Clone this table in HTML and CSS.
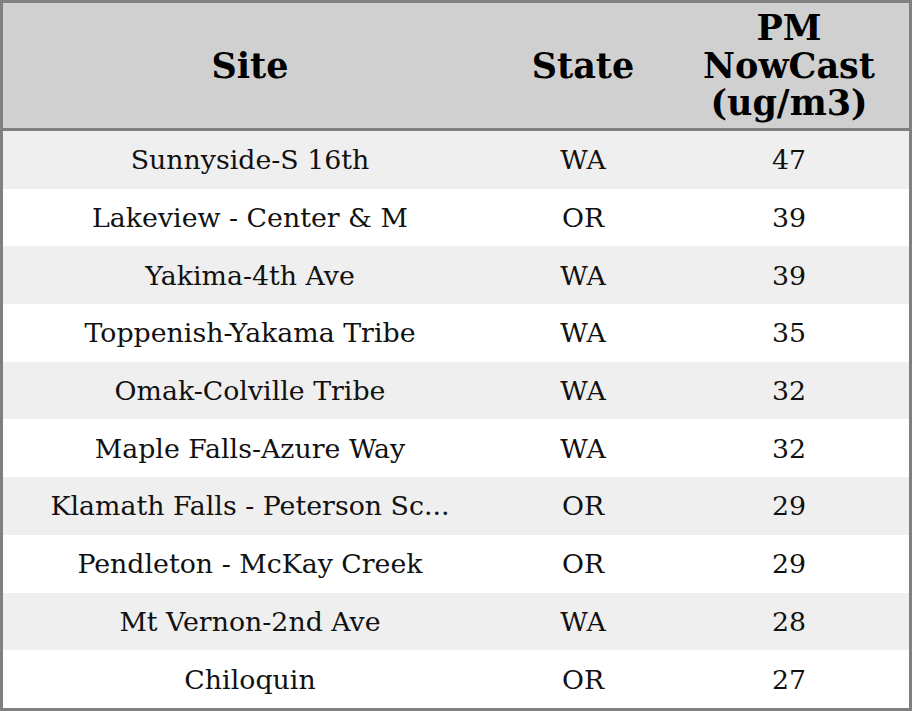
FILE: index.html
```html
<!DOCTYPE html>
<html>
<head>
<meta charset="utf-8">
<link rel="stylesheet" href="styles.css">
</head>
<body>
<table class="aq">
  <colgroup>
    <col class="c-site">
    <col class="c-state">
    <col class="c-pm">
  </colgroup>
  <thead>
    <tr><th>Site</th><th>State</th><th>PM<br>NowCast<br>(ug/m3)</th></tr>
  </thead>
  <tbody>
    <tr><td>Sunnyside-S 16th</td><td>WA</td><td>47</td></tr>
    <tr><td>Lakeview - Center &amp; M</td><td>OR</td><td>39</td></tr>
    <tr><td>Yakima-4th Ave</td><td>WA</td><td>39</td></tr>
    <tr><td>Toppenish-Yakama Tribe</td><td>WA</td><td>35</td></tr>
    <tr><td>Omak-Colville Tribe</td><td>WA</td><td>32</td></tr>
    <tr><td>Maple Falls-Azure Way</td><td>WA</td><td>32</td></tr>
    <tr><td title="Klamath Falls - Peterson School">Klamath Falls - Peterson Sc...</td><td>OR</td><td>29</td></tr>
    <tr><td>Pendleton - McKay Creek</td><td>OR</td><td>29</td></tr>
    <tr><td>Mt Vernon-2nd Ave</td><td>WA</td><td>28</td></tr>
    <tr><td>Chiloquin</td><td>OR</td><td>27</td></tr>
  </tbody>
</table>
</body>
</html>
```
FILE: styles.css
```css
html, body {
  margin: 0;
  padding: 0;
  background: #ffffff;
}
.aq {
  box-sizing: border-box;
  width: 912px;
  height: 711px;
  table-layout: fixed;
  border-collapse: separate;
  border-spacing: 0;
  border: 3px solid #808080;
  font-family: "DejaVu Serif", serif;
  color: #111111;
}
.c-site { width: 494px; }
.c-state { width: 172px; }
.c-pm { width: 240px; }
.aq th {
  height: 125px;
  padding: 0 10px;
  background: #d0d0d0;
  border-bottom: 3px solid #808080;
  font-size: 35px;
  font-weight: bold;
  line-height: 37.5px;
  color: #000000;
  text-align: center;
  vertical-align: middle;
}
.aq td {
  height: 57.7px;
  padding: 0 10px;
  font-size: 26.8px;
  text-align: center;
  vertical-align: middle;
  white-space: nowrap;
  overflow: hidden;
}
.aq tbody tr:nth-child(odd) td {
  background: #efefef;
}
```
